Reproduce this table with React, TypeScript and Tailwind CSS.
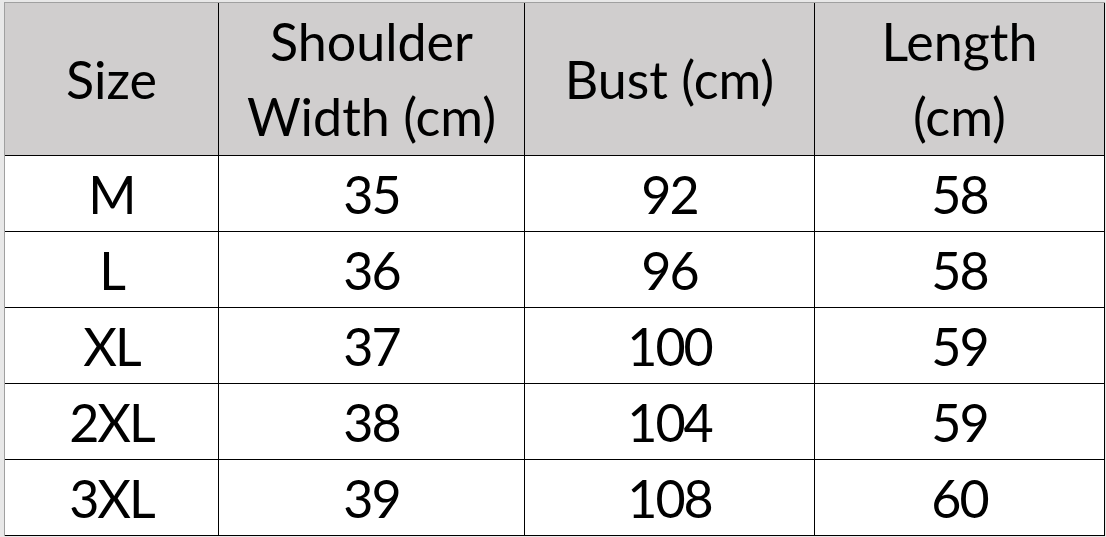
const rows = [
  ["M", "35", "92", "58"],
  ["L", "36", "96", "58"],
  ["XL", "37", "100", "59"],
  ["2XL", "38", "104", "59"],
  ["3XL", "39", "108", "60"],
];

const cell = "flex items-center justify-center border-r border-b border-black text-center";

export default function App() {
  return (
    <div
      className="w-[1106px] h-[537px] bg-[#e8e8e8] pt-[2px] pl-[4px] text-black text-[52px]"
      style={{ fontFamily: "Lato, 'Open Sans', sans-serif" }}
    >
      <div className="w-[1101px] border-t border-l border-[#a0a0a0] grid grid-cols-[214px_306px_290px_290px]">
        <div className={`${cell} h-[153px] bg-[#d0cece] leading-[75px]`}>Size</div>
        <div className={`${cell} h-[153px] bg-[#d0cece] leading-[75px]`}>
          Shoulder
          <br />
          Width (cm)
        </div>
        <div className={`${cell} h-[153px] bg-[#d0cece] leading-[75px]`}>Bust (cm)</div>
        <div className={`${cell} h-[153px] bg-[#d0cece] leading-[75px]`}>
          Length
          <br />
          (cm)
        </div>
        {rows.map((r) =>
          r.map((v, i) => (
            <div key={r[0] + i} className={`${cell} h-[76px] bg-white tracking-[-2px]`}>
              {v}
            </div>
          ))
        )}
      </div>
    </div>
  );
}
